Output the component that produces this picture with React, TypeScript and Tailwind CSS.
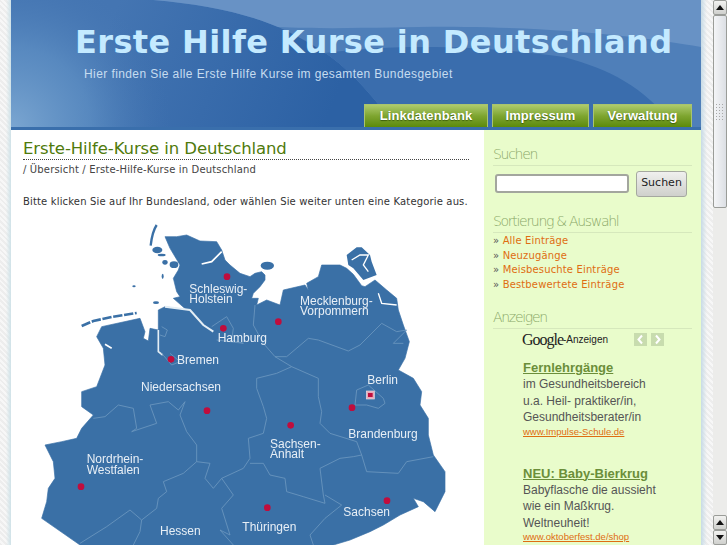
const sans = "font-['Liberation_Sans',Arial,sans-serif]";
const deja = "font-['DejaVu_Sans',Verdana,sans-serif]";

const HeaderArt = () => (
  <svg className="absolute inset-0 h-full w-full" viewBox="0 0 690 127" preserveAspectRatio="none">
    <defs>
      <linearGradient id="base" x1="100" y1="20" x2="320" y2="110" gradientUnits="userSpaceOnUse">
        <stop offset="0" stopColor="#4475b2" />
        <stop offset="1" stopColor="#2c61a4" />
      </linearGradient>
      <radialGradient id="glow" cx="0" cy="127" r="160" gradientUnits="userSpaceOnUse">
        <stop offset="0" stopColor="#7ba6d1" stopOpacity="1" />
        <stop offset="0.5" stopColor="#6596c8" stopOpacity="0.6" />
        <stop offset="1" stopColor="#4475b2" stopOpacity="0" />
      </radialGradient>
    </defs>
    <rect width="690" height="127" fill="url(#base)" />
    <rect width="690" height="127" fill="url(#glow)" />
    <path d="M142 0H690V127H385C365 100 340 70 314 53C295 40 280 33 267 27C235 13 190 4 142 0Z" fill="#4f7fb9" />
    <path d="M314 53C400 42 490 48 553 57C600 70 630 85 665 127H385C365 100 340 70 314 53Z" fill="#3a6dad" />
    <path d="M142 0H690V47C640 38 560 28 453 27C400 26 330 30 267 27C235 13 190 4 142 0Z" fill="#6892c5" />
  </svg>
);

const NavButton = ({ label, width }: { label: string; width: string }) => (
  <a className={`${width} flex h-[23px] items-center justify-center border-x border-t border-[#a9c46e] bg-gradient-to-b from-[#aecb6b] via-[#7ea52f] to-[#5c8a08] text-[13px] font-bold tracking-[0.05px] text-white [text-shadow:0_1px_1px_rgba(40,70,0,0.7)] ${sans}`}>
    {label}
  </a>
);

const Header = () => (
  <div className="relative h-[130px] overflow-hidden border-b-[3px] border-[#3a6fac]">
    <HeaderArt />
    <div className="relative flex h-full flex-col">
      <h1 className={`pl-[64px] pt-[21px] text-[32px] leading-[42px] font-bold tracking-[0.38px] whitespace-nowrap text-[#c4eaff] ${deja}`}>
        Erste Hilfe Kurse in Deutschland
      </h1>
      <p className={`pl-[73px] pt-[3px] text-[12px] leading-[16px] tracking-[0.41px] text-[#c6dcf0] ${sans}`}>
        Hier finden Sie alle Erste Hilfe Kurse im gesamten Bundesgebiet
      </p>
      <nav className="mt-auto flex justify-end gap-[4px] pr-[9px]">
        <NavButton label="Linkdatenbank" width="w-[124px]" />
        <NavButton label="Impressum" width="w-[97px]" />
        <NavButton label="Verwaltung" width="w-[99px]" />
      </nav>
    </div>
  </div>
);

const coast =
  "M405 65 440 65 470 60 510 78 560 80 575 105 585 135 600 150 630 175 660 185 675 175 695 170 705 180 705 195 690 215 670 235 665 250 685 250 680 270 710 255 750 270 760 225 825 210 835 225 830 205 865 185 875 150 930 150 950 160 970 178 995 212 1005 215 1035 195 1070 225 1100 250 1105 285 1120 330 1138 380 1125 430 1105 465 1150 490 1175 530 1170 570 1195 610 1195 660 1210 720 1245 770 1245 830 1215 890 1180 860 1150 850 1165 875 1110 900 1060 930 1020 950 960 975 910 990 150 990 35 910 50 860 55 820 75 790 70 740 45 690 95 680 140 670 155 640 190 600 155 575 155 530 200 515 225 450 220 400 200 365 215 335 330 310 345 350 340 370 355 378 360 340 385 345 385 285 405 275 470 285 430 250 450 245 440 230 430 190 445 165 450 150 420 100Z";

const rugen = "M950 120 980 97 995 97 1020 120 1025 140 1040 180 1000 195 970 160 955 150Z";

const borders = [
  "M190 610 225 605 265 570 310 580 320 640 305 650 380 625 360 570 415 560 445 585 465 560 450 600 470 650 500 690 500 740 540 745 525 790 550 820 575 790 640 760 660 730 655 670 700 655 710 610 700 575 680 520 680 490 740 475 785 455 865 490 865 545 875 590 870 625 900 655 980 680 995 720 970 725 930 730 870 760 880 840 885 865 820 845 770 830 765 790 720 780 700 745 660 745",
  "M500 740 460 775 400 800 410 830 385 850 380 880 335 915 300 885 230 935 150 985",
  "M335 915 330 950 310 990",
  "M575 790 610 840 575 880 600 960 570 945 610 990",
  "M885 840 935 870 885 910 840 960 850 990",
  "M675 270 670 330 700 385 735 425 785 455",
  "M735 425 770 425 835 370 865 375 955 408 990 390 1055 325 1100 350 1130 345 1090 385 1120 385",
  "M995 720 1010 770 1105 775 1130 740 1210 725",
  "M545 335 590 305 610 340 605 375 640 385 560 375",
  "M395 415 425 450 450 440 420 415",
  "M395 335 412 345 405 365 390 360",
  "M975 570 980 525 1015 510 1060 550 1065 565 1045 580 1010 570 975 570",
];

const labels: [string, number, number][] = [
  ["Schleswig-", 478, 234],
  ["Holstein", 478, 265],
  ["Hamburg", 563, 380],
  ["Bremen", 441, 446],
  ["Niedersachsen", 333, 529],
  ["Mecklenburg-", 810, 269],
  ["Vorpommern", 810, 300],
  ["Berlin", 1012, 507],
  ["Brandenburg", 955, 669],
  ["Sachsen-", 720, 699],
  ["Anhalt", 720, 730],
  ["Nordrhein-", 170, 745],
  ["Westfalen", 170, 777],
  ["Hessen", 390, 959],
  ["Thüringen", 637, 948],
  ["Sachsen", 940, 902],
];

const dots = [
  [591, 185],
  [580, 340],
  [423, 433],
  [531, 587],
  [153, 815],
  [745, 320],
  [966, 578],
  [782, 631],
  [712, 878],
  [1071, 857],
];

const GermanyMap = () => (
  <svg viewBox="0 0 1335 990" className="block h-[330px] w-[445px] blur-[0.4px]">
    <path d={coast} fill="#3a70a6" stroke="#3a70a6" strokeWidth="2" strokeLinejoin="round" />
    <path d={rugen} fill="#3a70a6" />
    {/* islands */}
    <path d="M380 30C370 45 365 65 362 92" fill="none" stroke="#3a70a6" strokeWidth="7" />
    <ellipse cx="382" cy="105" rx="15" ry="10" fill="#3a70a6" />
    <ellipse cx="395" cy="120" rx="12" ry="4" fill="#3a70a6" />
    <ellipse cx="432" cy="149" rx="13" ry="10" fill="#3a70a6" />
    <ellipse cx="405" cy="142" rx="8" ry="7" fill="#3a70a6" />
    <ellipse cx="398" cy="184" rx="3" ry="8" fill="#3a70a6" />
    <ellipse cx="312" cy="214" rx="5" ry="3" fill="#3a70a6" />
    <ellipse cx="378" cy="263" rx="9" ry="4" fill="#3a70a6" />
    <ellipse cx="712" cy="152" rx="20" ry="12" fill="#3a70a6" />
    <path d="M155 333 190 318 245 306 320 294" fill="none" stroke="#3a70a6" strokeWidth="8" strokeDasharray="28 5" />
    {/* water */}
    <path d="M515 147 545 140 575 110" fill="none" stroke="#fff" strokeWidth="5" />
    <path d="M225 388 245 400" fill="none" stroke="#fff" strokeWidth="5" />
    <path d="M405 275 480 285 520 330 550 350" fill="none" stroke="#e4eef5" strokeWidth="6" />
    <path d="M385 345 385 410 398 420" fill="none" stroke="#e4eef5" strokeWidth="5" />
    <path d="M965 135 990 120 1015 120 1000 150 1015 170" fill="none" stroke="#fff" strokeWidth="4" />
    <path d="M1045 235 1055 265 1100 270" fill="none" stroke="#fff" strokeWidth="4" />
    {/* state borders */}
    {borders.map((d) => (
      <path key={d} d={d} fill="none" stroke="#6c97bf" strokeWidth="2.5" strokeLinejoin="round" />
    ))}
    {dots.map(([x, y]) => (
      <circle key={`${x}-${y}`} cx={x} cy={y} r="10" fill="#c00d3d" />
    ))}
    <rect x="1009" y="528" width="24" height="24" fill="#e8a9b9" stroke="#e5dfe5" strokeWidth="2" />
    <rect x="1014" y="534" width="14" height="12" fill="#c00d3d" />
    {labels.map(([text, x, y]) => (
      <text key={text + y} x={x} y={y} fontSize="36" fontFamily="Liberation Sans, Arial, sans-serif" fill="#e8eff6">
        {text}
      </text>
    ))}
  </svg>
);

const MainColumn = () => (
  <main className={`w-[473px] shrink-0 overflow-hidden bg-white pt-[7px] ${deja}`}>
    <div className="ml-[12px] w-[446px]">
      <h2 className="h-[23px] border-b border-dotted border-[#444] text-[16.5px] leading-[24px] tracking-[-0.1px] whitespace-nowrap text-[#4f7a0c]">
        Erste-Hilfe-Kurse in Deutschland
      </h2>
      <p className="mt-[2px] text-[10px] leading-[16px] tracking-[0.16px] whitespace-nowrap text-[#444]">
        / Übersicht / Erste-Hilfe-Kurse in Deutschland
      </p>
      <p className="mt-[16px] text-[10px] leading-[16px] tracking-[0.16px] whitespace-nowrap text-[#333]">
        Bitte klicken Sie auf Ihr Bundesland, oder wählen Sie weiter unten eine Kategorie aus.
      </p>
    </div>
    <div className="ml-[19px] mt-[5px]">
      <GermanyMap />
    </div>
  </main>
);

const SideHeading = ({ children }: { children: string }) => (
  <h3 className="h-[23px] border-b border-[#d6e8bc] text-[14px] leading-[22px] font-extralight tracking-[-1.3px] whitespace-nowrap text-[#8aa868]">
    {children}
  </h3>
);

const Ad = ({ title, lines, url }: { title: string; lines: string[]; url: string }) => (
  <div className={`ml-[30px] ${sans}`}>
    <a className="block text-[13px] leading-[17px] font-bold text-[#6b8e3a] underline">{title}</a>
    {lines.map((line) => (
      <p key={line} className="text-[12px] leading-[16.5px] whitespace-nowrap text-[#555]">
        {line}
      </p>
    ))}
    <a className="block text-[9.5px] leading-[12px] text-[#df6d12] underline">{url}</a>
  </div>
);

const Sidebar = () => (
  <aside className={`w-[217px] shrink-0 overflow-hidden bg-[#e9fccb] px-[9px] pt-[13px] ${deja}`}>
    <SideHeading>Suchen</SideHeading>
    <div className="mt-[4px] flex h-[27px] items-center pl-[2px]">
      <input className="h-[19px] w-[134px] rounded-[3px] border-2 border-[#a3a69e] bg-white" />
      <button className="ml-[7px] h-[26px] w-[51px] rounded-[3px] border border-[#a5a8a0] bg-gradient-to-b from-[#f0f0ee] to-[#cfd0cc] text-[11px] text-[#222]">
        Suchen
      </button>
    </div>
    <div className="mt-[13px]">
      <SideHeading>Sortierung &amp; Auswahl</SideHeading>
    </div>
    <ul className="mt-[1px] text-[10px] leading-[14.5px] tracking-[0.15px] whitespace-nowrap text-[#df6d12]">
      {["Alle Einträge", "Neuzugänge", "Meisbesuchte Einträge", "Bestbewertete Einträge"].map((item) => (
        <li key={item}>
          <span className="text-[#555]">»</span> {item}
        </li>
      ))}
    </ul>
    <div className="mt-[14px]">
      <SideHeading>Anzeigen</SideHeading>
    </div>
    <div className="flex h-[21px] items-center pl-[29px]">
      <span className="w-[41px] font-['Liberation_Serif',serif] text-[16px] font-medium tracking-[-1px] text-[#222]">Google</span>
      <span className={`w-[71px] text-[10px] text-[#222] ${sans}`}>-Anzeigen</span>
      <span className="flex h-[13px] w-[13px] items-center justify-center bg-[#c8dcae] text-white">
        <svg viewBox="0 0 13 13" className="h-[13px] w-[13px]">
          <path d="M8 2.5 4.5 6.5 8 10.5" fill="none" stroke="#fff" strokeWidth="2" />
        </svg>
      </span>
      <span className="ml-[4px] flex h-[13px] w-[13px] items-center justify-center bg-[#c8dcae]">
        <svg viewBox="0 0 13 13" className="h-[13px] w-[13px]">
          <path d="M5 2.5 8.5 6.5 5 10.5" fill="none" stroke="#fff" strokeWidth="2" />
        </svg>
      </span>
    </div>
    <div className="mt-[9px] flex flex-col gap-[27px]">
      <Ad
        title="Fernlehrgänge"
        lines={["im Gesundheitsbereich", "u.a. Heil- praktiker/in,", "Gesundheitsberater/in"]}
        url="www.Impulse-Schule.de"
      />
      <Ad
        title="NEU: Baby-Bierkrug"
        lines={["Babyflasche die aussieht", "wie ein Maßkrug.", "Weltneuheit!"]}
        url="www.oktoberfest.de/shop"
      />
    </div>
  </aside>
);

const ScrollButton = ({ dir }: { dir: "up" | "down" }) => (
  <div className="flex h-[15px] w-[14px] shrink-0 items-center justify-center rounded-[2px] border border-[#9a9c98] bg-gradient-to-b from-[#f2f2f0] to-[#cfd0cd]">
    <svg viewBox="0 0 8 5" className="h-[5px] w-[8px]">
      <path d={dir === "up" ? "M0 5 4 0 8 5Z" : "M0 0 8 0 4 5Z"} fill="#111" />
    </svg>
  </div>
);

const Scrollbar = () => (
  <div className="flex w-[14px] shrink-0 flex-col bg-[#ececea]">
    <ScrollButton dir="up" />
    <div className="flex h-[193px] shrink-0 items-center justify-center rounded-[2px] border border-[#9a9c98] bg-gradient-to-r from-[#f4f5f7] to-[#dcdfe4]">
      <div className="h-[17px] w-[10px] bg-[radial-gradient(#a8a8a8_1px,transparent_1px)] bg-[length:3px_3px]" />
    </div>
    <div className="flex-1" />
    <ScrollButton dir="up" />
    <ScrollButton dir="down" />
  </div>
);

const hatch =
  "bg-[repeating-linear-gradient(45deg,#ededed_0,#ededed_2px,#f7f7f7_2px,#f7f7f7_4px)]";

export default function App() {
  return (
    <div className="flex h-[545px] w-[727px] overflow-hidden bg-white">
      <div className={`flex w-[11px] shrink-0 justify-end ${hatch}`}>
        <div className="w-[5px] bg-gradient-to-r from-transparent to-[#cfe2e8]" />
      </div>
      <div className="flex w-[690px] shrink-0 flex-col">
        <Header />
        <div className="flex min-h-0 flex-1">
          <MainColumn />
          <Sidebar />
        </div>
      </div>
      <div className={`flex w-[12px] shrink-0 ${hatch}`}>
        <div className="w-[6px] bg-gradient-to-r from-[#c8dbe6] to-transparent" />
      </div>
      <Scrollbar />
    </div>
  );
}
